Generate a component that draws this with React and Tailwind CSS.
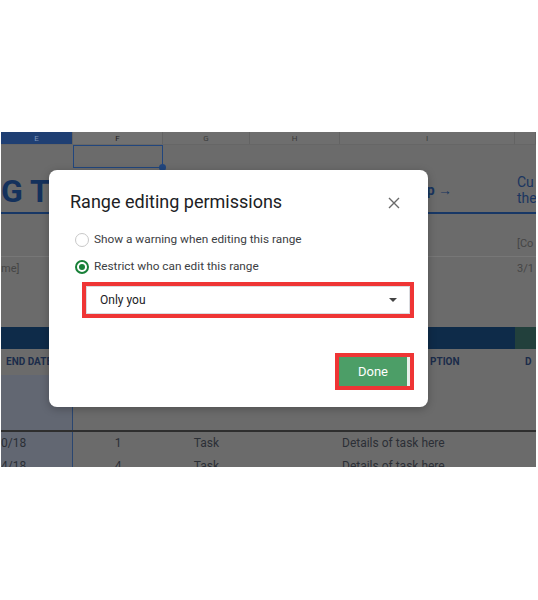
import React from 'react';

const font = { fontFamily: 'Roboto, "Liberation Sans", sans-serif' };
const cols = 'grid grid-cols-[72px_90px_87px_90px_175px_1fr]';

function Cell({ className = '', children }) {
  return <div className={`overflow-hidden whitespace-nowrap border-r border-[#636363] ${className}`}>{children}</div>;
}

function Sheet() {
  return (
    <div className="ml-px w-[535px] h-[335px] bg-[#6b6b6b] overflow-hidden flex flex-col">
      {/* column letters */}
      <div className={`${cols} h-[13px] shrink-0 text-[8px] leading-[13px] text-[#3a3a3a] border-b border-[#666]`}>
        <Cell className="bg-[#1f3f73] text-[#7d93b8] text-center">E</Cell>
        <Cell className="bg-[#717171] text-center text-[#222]">F</Cell>
        <Cell className="bg-[#6e6e6e] text-center">G</Cell>
        <Cell className="bg-[#6e6e6e] text-center">H</Cell>
        <Cell className="bg-[#6e6e6e] text-center">I</Cell>
        <Cell className="bg-[#6e6e6e]" />
      </div>
      {/* selected cell row */}
      <div className={`${cols} h-[23px] shrink-0`}>
        <div />
        <div className="relative border border-[#21467e]">
          <span className="absolute -right-[4px] -bottom-[4px] w-[7px] h-[7px] rounded-full bg-[#21467e]" />
        </div>
        <div /><div /><div /><div />
      </div>
      {/* title row */}
      <div className={`${cols} h-[46px] shrink-0 border-b-2 border-[#173766]`}>
        <div className="pt-[5px] text-[32px] leading-[36px] font-bold text-[#14315c]">G T</div>
        <div /><div /><div />
        <div className="flex justify-end items-start pr-[63px] pt-[12px] text-[14px] font-bold text-[#17345f]">p →</div>
        <div className="pl-[2px] pt-[6px] text-[14px] leading-[16px] text-[#1a3560]">
          <div>Cu</div>
          <div>the</div>
        </div>
      </div>
      {/* info rows */}
      <div className={`${cols} h-[43px] shrink-0 border-b border-[#777]`}>
        <div /><div /><div /><div /><div />
        <div className="pl-[2px] pt-[22px] text-[11px] text-[#454545]">[Co</div>
      </div>
      <div className={`${cols} h-[23px] shrink-0 text-[11px] leading-[23px] text-[#454545]`}>
        <div>me]</div>
        <div /><div /><div /><div />
        <div className="pl-[2px]">3/1</div>
      </div>
      <div className="h-[47px] shrink-0" />
      {/* blue band */}
      <div className="h-[22px] shrink-0 flex">
        <div className="w-[514px] bg-[#0e2b49]" />
        <div className="flex-1 bg-[#22403c]" />
      </div>
      {/* header labels */}
      <div className={`${cols} h-[26px] shrink-0 text-[10px] leading-[26px] font-bold text-[#1b2c4a]`}>
        <div className="pl-[5px] whitespace-nowrap">END DATE</div>
        <div /><div /><div />
        <div className="pl-[90px]">PTION</div>
        <div className="pl-[10px]">D</div>
      </div>
      <div className={`${cols} h-[55px] shrink-0`}>
        <div className="bg-[#626772] border-r border-[#2a4670]" />
      </div>
      <div className="h-[2px] shrink-0 bg-[#2e2e2e]" />
      {[['0/18', '1'], ['4/18', '4']].map(([d, n]) => (
        <div key={d} className={`${cols} h-[23px] shrink-0 text-[12px] leading-[23px] text-[#2b2f36]`}>
          <div className="bg-[#626772] border-r border-[#2a4670]">{d}</div>
          <div className="text-center">{n}</div>
          <div className="text-center">Task</div>
          <div />
          <div className="pl-[2px] whitespace-nowrap">Details of task here</div>
          <div />
        </div>
      ))}
    </div>
  );
}

function Radio({ checked, label }) {
  return (
    <div className="flex items-center gap-[5px] h-[20px]">
      {checked ? (
        <span className="w-[14px] h-[14px] rounded-full border-2 border-[#188038] flex items-center justify-center bg-white">
          <span className="w-[6px] h-[6px] rounded-full bg-[#188038]" />
        </span>
      ) : (
        <span className="w-[14px] h-[14px] rounded-full border border-[#c8c8c8] bg-white" />
      )}
      <span className="text-[11.8px] text-[#3c4043]">{label}</span>
    </div>
  );
}

function Dialog() {
  return (
    <div className="absolute left-[49px] top-[38px] w-[379px] h-[237px] bg-white rounded-[8px] shadow-[0_2px_8px_rgba(0,0,0,0.25)] flex flex-col">
      <div className="flex items-start justify-between pt-[20px] pl-[21px] pr-[28px]">
        <h2 className="text-[18px] leading-[24px] text-[#202124]">Range editing permissions</h2>
        <svg width="12" height="12" viewBox="0 0 12 12" className="mt-[7px]">
          <path d="M1 1L11 11M11 1L1 11" stroke="#6a6a6a" strokeWidth="1.4" />
        </svg>
      </div>
      <div className="flex flex-col gap-[7px] mt-[16px] pl-[26px]">
        <Radio label="Show a warning when editing this range" />
        <Radio checked label="Restrict who can edit this range" />
      </div>
      <div className="mt-[5px] ml-[33px] mr-[14px] h-[36px] border-4 border-[#ef3535]">
        <div className="h-full border border-[#dadce0] flex items-center justify-between pl-[13px] pr-[12px]">
          <span className="text-[12px] text-[#202124]">Only you</span>
          <span className="w-0 h-0 border-l-[4px] border-r-[4px] border-t-[4px] border-l-transparent border-r-transparent border-t-[#444]" />
        </div>
      </div>
      <div className="mt-[35px] mr-[14px] flex justify-end">
        <div className="w-[79px] h-[37px] border-4 border-[#ef3535] flex">
          <div className="flex-1 bg-[#4c9e67] flex items-center justify-center text-white text-[13px]">Done</div>
          <div className="w-[3px] bg-[#e8f1eb]" />
        </div>
      </div>
    </div>
  );
}

export default function App() {
  return (
    <div className="w-[538px] h-[600px] bg-white flex flex-col" style={font}>
      <div className="h-[132px] shrink-0" />
      <div className="relative">
        <Sheet />
        <Dialog />
      </div>
    </div>
  );
}
